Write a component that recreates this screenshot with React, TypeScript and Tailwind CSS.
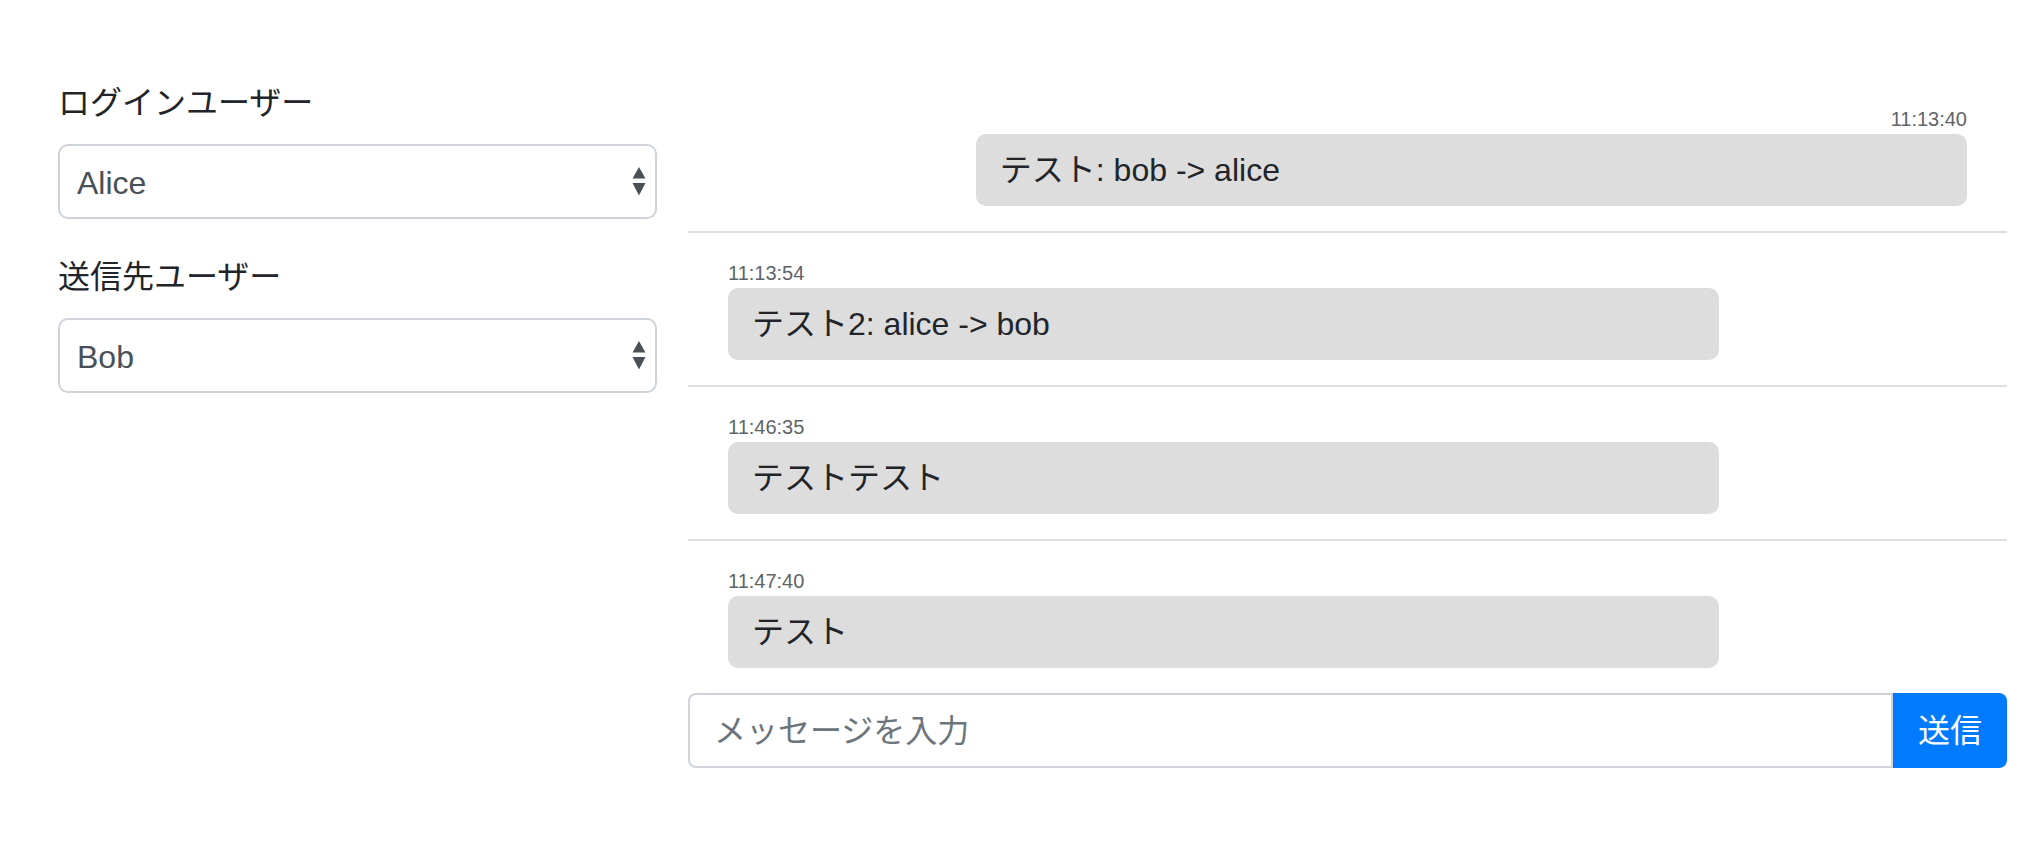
import { useState } from "react";

type Message = {
  id: number;
  time: string;
  text: string;
  mine: boolean;
};

const messages: Message[] = [
  { id: 1, time: "11:13:40", text: "テスト: bob -> alice", mine: true },
  { id: 2, time: "11:13:54", text: "テスト2: alice -> bob", mine: false },
  { id: 3, time: "11:46:35", text: "テストテスト", mine: false },
  { id: 4, time: "11:47:40", text: "テスト", mine: false },
];

function SelectArrows() {
  return (
    <svg
      width="14"
      height="30"
      viewBox="0 0 14 30"
      className="pointer-events-none absolute right-[11px] top-1/2 -translate-y-1/2"
    >
      <path d="M7 0 L13.5 11.5 L0.5 11.5 Z" fill="#495057" />
      <path d="M0.5 16 L13.5 16 L7 28.5 Z" fill="#495057" />
    </svg>
  );
}

function UserSelect({ label, value, options }: { label: string; value: string; options: string[] }) {
  const [current, setCurrent] = useState(value);
  return (
    <div className="mb-[34px]">
      <label className="mb-[17px] block text-[32px] leading-[48px]">{label}</label>
      <div className="relative">
        <select
          value={current}
          onChange={(e) => setCurrent(e.target.value)}
          className="block h-[75px] w-full appearance-none rounded-[10px] border-2 border-[#ced4da] bg-white pl-[17px] pr-12 pt-[2px] text-[32px] text-[#495057] outline-none"
        >
          {options.map((o) => (
            <option key={o}>{o}</option>
          ))}
        </select>
        <SelectArrows />
      </div>
    </div>
  );
}

export default function App() {
  return (
    <div className="flex bg-white pl-[58px] pr-[29px] pt-[79px] font-['Liberation_Sans','Noto_Sans_CJK_JP',sans-serif] text-[#212529]">
      <div className="w-[599px] shrink-0">
        <UserSelect label="ログインユーザー" value="Alice" options={["Alice", "Bob"]} />
        <UserSelect label="送信先ユーザー" value="Bob" options={["Alice", "Bob"]} />
      </div>

      <div className="ml-[31px] w-[1319px] shrink-0">
        {messages.map((m, i) => (
          <div
            key={m.id}
            className={
              "flex flex-col px-10 py-[25px] " +
              (m.mine ? "items-end " : "items-start ") +
              (i < messages.length - 1 ? "border-b-2 border-[#dfdfdf]" : "")
            }
          >
            <div className="text-[20px] leading-[30px] text-[#5f6468]">{m.time}</div>
            <div className="w-[80%] rounded-[10px] bg-[#dddddd] px-6 py-3 text-[32px] leading-[48px]">
              {m.text}
            </div>
          </div>
        ))}

        <div className="flex h-[75px]">
          <input
            placeholder="メッセージを入力"
            className="min-w-0 flex-1 rounded-l-[8px] border-2 border-[#ced4da] px-6 text-[32px] text-[#495057] outline-none placeholder:text-[#6c757d]"
          />
          <button className="w-[114px] rounded-r-[8px] bg-[#007bff] text-[32px] text-white">送信</button>
        </div>
      </div>
    </div>
  );
}
